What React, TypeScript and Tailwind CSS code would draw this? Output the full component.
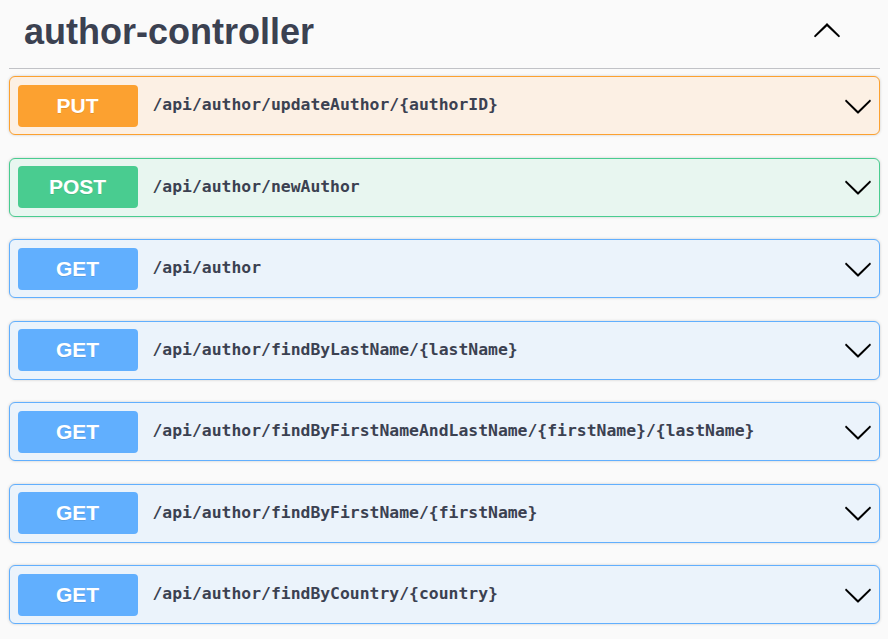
const ops = [
  { method: "PUT", path: "/api/author/updateAuthor/{authorID}" },
  { method: "POST", path: "/api/author/newAuthor" },
  { method: "GET", path: "/api/author" },
  { method: "GET", path: "/api/author/findByLastName/{lastName}" },
  { method: "GET", path: "/api/author/findByFirstNameAndLastName/{firstName}/{lastName}" },
  { method: "GET", path: "/api/author/findByFirstName/{firstName}" },
  { method: "GET", path: "/api/author/findByCountry/{country}" },
];

const tones: Record<string, { box: string; badge: string }> = {
  PUT: { box: "border-[#fca130] bg-[#fcf0e4]", badge: "bg-[#fca130]" },
  POST: { box: "border-[#49cc90] bg-[#e8f6f0]", badge: "bg-[#49cc90]" },
  GET: { box: "border-[#61affe] bg-[#ebf3fb]", badge: "bg-[#61affe]" },
};

function Arrow({ up = false }: { up?: boolean }) {
  return (
    <svg className={up ? "h-[30px] w-[30px] rotate-180" : "h-[30px] w-[30px]"} viewBox="0 0 20 20" fill="#000">
      <path d="M17.418 6.109c.272-.268.709-.268.979 0s.271.701 0 .969l-7.908 7.83c-.27.268-.707.268-.979 0l-7.908-7.83c-.27-.268-.27-.701 0-.969.271-.268.709-.268.979 0L10 13.25l7.418-7.141z" />
    </svg>
  );
}

export default function App() {
  return (
    <div className="min-h-[639px] bg-[#fafafa] pl-[9px] pr-[8px] font-['Liberation_Sans',Arial,sans-serif] text-[#3b4151]">
      <div className="flex h-[69px] items-center justify-between border-b border-[#c1c2c6] pl-[15px] pr-[38px] pb-[6px]">
        <h3 className="text-[36px] font-bold leading-[41px]">author-controller</h3>
        <Arrow up />
      </div>
      <div className="mt-[7px] space-y-[22.5px]">
        {ops.map((op) => (
          <div
            className={`flex items-center rounded-[6px] border py-[7.5px] pl-[7.5px] pr-[6px] shadow-[0_0_3px_rgba(0,0,0,0.19)] ${tones[op.method].box}`}
            key={op.path}
          >
            <span
              className={`flex h-[42px] w-[120px] items-center justify-center rounded-[4px] text-[21px] font-bold text-white [text-shadow:0_1px_0_rgba(0,0,0,0.1)] ${tones[op.method].badge}`}
            >
              {op.method}
            </span>
            <span className="flex-1 pl-[15px] font-['DejaVu_Sans_Mono',monospace] text-[16.4px] font-semibold">{op.path}</span>
            <Arrow />
          </div>
        ))}
      </div>
    </div>
  );
}
